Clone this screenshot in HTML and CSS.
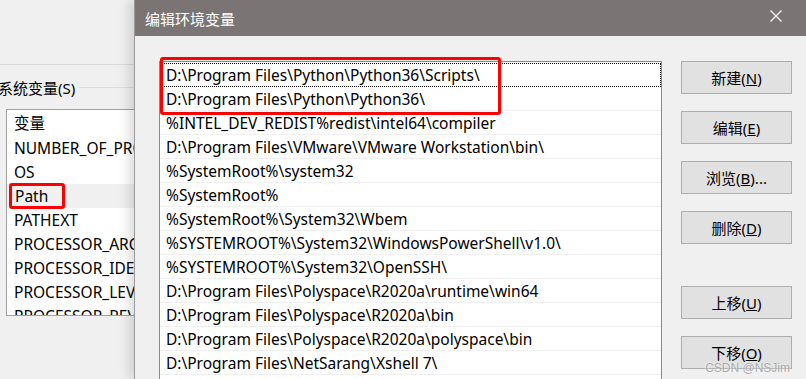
FILE: index.html
```html
<!DOCTYPE html>
<html>
    <head>
        <meta charset="utf-8">
        <link rel="stylesheet" href="styles.css">
    </head>
    <body>
        <div id="backwin">
            <div class="topline"></div>
            <div class="group">
                <span>系统变量(S)</span>
                <div class="groupline"></div>
            </div>
            <div id="sysvars">
                <div class="vrow head">变量</div>
                <div class="vrow">NUMBER_OF_PROCESSORS</div>
                <div class="vrow">OS</div>
                <div class="vrow sel"><span class="mark">Path</span></div>
                <div class="vrow">PATHEXT</div>
                <div class="vrow">PROCESSOR_ARCHITECTURE</div>
                <div class="vrow">PROCESSOR_IDENTIFIER</div>
                <div class="vrow">PROCESSOR_LEVEL</div>
                <div class="vrow">PROCESSOR_REVISION</div>
            </div>
        </div>

        <div id="dialog">
            <div id="titlebar">
                <span>编辑环境变量</span>
                <svg class="close" width="12" height="12" viewBox="0 0 12 12">
                    <path d="M0.5 0.5 L11.5 11.5 M11.5 0.5 L0.5 11.5" stroke="white" stroke-width="1.2"/>
                </svg>
            </div>
            <div id="dbody">
                <div id="pathlist">
                    <div class="redbox"></div>
                    <div class="prow first">D:\Program Files\Python\Python36\Scripts\</div>
                    <div class="prow">D:\Program Files\Python\Python36\</div>
                    <div class="prow">%INTEL_DEV_REDIST%redist\intel64\compiler</div>
                    <div class="prow">D:\Program Files\VMware\VMware Workstation\bin\</div>
                    <div class="prow">%SystemRoot%\system32</div>
                    <div class="prow">%SystemRoot%</div>
                    <div class="prow">%SystemRoot%\System32\Wbem</div>
                    <div class="prow">%SYSTEMROOT%\System32\WindowsPowerShell\v1.0\</div>
                    <div class="prow">%SYSTEMROOT%\System32\OpenSSH\</div>
                    <div class="prow">D:\Program Files\Polyspace\R2020a\runtime\win64</div>
                    <div class="prow">D:\Program Files\Polyspace\R2020a\bin</div>
                    <div class="prow">D:\Program Files\Polyspace\R2020a\polyspace\bin</div>
                    <div class="prow">D:\Program Files\NetSarang\Xshell 7\</div>
                </div>
                <div id="buttons">
                    <button class="btn">新建(<u>N</u>)</button>
                    <button class="btn">编辑(<u>E</u>)</button>
                    <button class="btn">浏览(<u>B</u>)...</button>
                    <button class="btn">删除(<u>D</u>)</button>
                    <button class="btn move">上移(<u>U</u>)</button>
                    <button class="btn">下移(<u>O</u>)</button>
                </div>
            </div>
        </div>

        <div id="watermark">CSDN @NSJim</div>
    </body>
</html>
```

FILE: styles.css
```css
body{
    margin: 0;
    width: 806px;
    height: 379px;
    overflow: hidden;
    background: #f0f0f0;
    font-family: "Noto Sans", "Noto Sans CJK SC", sans-serif;
    font-size: 15.5px;
    color: #000;
    display: flex;
    position: relative;
}

#backwin{
    width: 134px;
    flex: none;
    overflow: hidden;
}
.topline{
    height: 64px;
    border-bottom: solid 1px #dadada;
}
.group{
    display: flex;
    align-items: center;
    height: 20px;
    margin-top: 12px;
    margin-left: -2px;
    font-size: 15px;
}
.group span{
    white-space: nowrap;
    padding-right: 4px;
}
.groupline{
    flex: 1;
    border-top: solid 1px #dcdcdc;
}
#sysvars{
    margin-top: 12px;
    margin-left: 6px;
    width: 220px;
    height: 205px;
    background: white;
    border: solid 1px #a0a0a0;
    overflow: hidden;
}
.vrow{
    height: 24px;
    line-height: 24px;
    padding-left: 7px;
    white-space: nowrap;
    overflow: hidden;
}
.vrow.head{
    height: 26px;
    line-height: 27px;
}
.vrow.sel{
    background: #f0f0f0;
    overflow: visible;
}
.mark{
    display: inline-block;
    margin-left: -5px;
    padding: 0 14px 0 3px;
    height: 20px;
    line-height: 21px;
    border: solid 3px #f00;
    border-radius: 3px;
    margin-top: -1px;
    vertical-align: top;
}

#dialog{
    flex: 1;
    border-left: solid 1px #9a9a9a;
    box-shadow: -6px 0 10px rgba(0,0,0,0.12);
    display: flex;
    flex-direction: column;
    z-index: 2;
}
#titlebar{
    height: 36px;
    flex: none;
    background: #7a7574;
    color: white;
    display: flex;
    align-items: center;
    padding-left: 10px;
    padding-right: 24px;
    justify-content: space-between;
    font-size: 15px;
}
.close{
    margin-top: -4px;
}
#dbody{
    flex: 1;
    display: flex;
    padding-top: 25px;
    padding-left: 24px;
    min-height: 0;
}
#pathlist{
    width: 501px;
    flex: none;
    background: white;
    border: solid 1px #8a8a8a;
    border-bottom: none;
    padding-top: 1px;
    position: relative;
}
.prow{
    height: 23px;
    line-height: 24px;
    padding-left: 6px;
    border-bottom: solid 1px #f0f0f0;
    white-space: nowrap;
    overflow: hidden;
}
.prow.first{
    outline: 1px dotted #000;
    outline-offset: -1px;
}
.redbox{
    position: absolute;
    left: 0;
    top: -5px;
    width: 335px;
    height: 52px;
    border: solid 3px #f00;
    border-radius: 3px;
}

#buttons{
    margin-left: 19px;
    display: flex;
    flex-direction: column;
    gap: 17px;
}
.btn{
    width: 111px;
    height: 33px;
    background: #e1e1e1;
    border: solid 1px #adadad;
    font-family: "Noto Sans", "Noto Sans CJK SC", sans-serif;
    font-size: 15px;
    padding: 0;
    color: #000;
}
.btn.move{
    margin-top: 25px;
}

#watermark{
    position: absolute;
    right: 16px;
    bottom: 4px;
    font-family: "Liberation Sans", sans-serif;
    font-size: 12px;
    color: rgba(150,150,150,0.8);
    text-shadow: 0 0 2px white;
    z-index: 3;
}
```
